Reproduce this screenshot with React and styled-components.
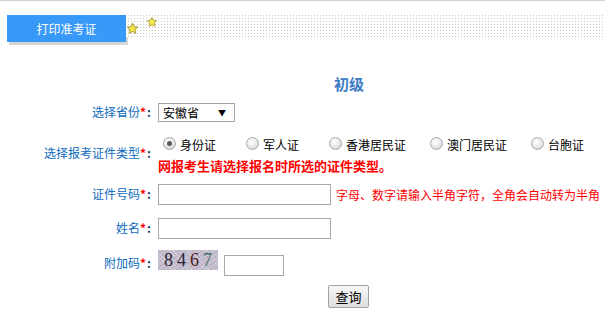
import React from "react";
import styled, { createGlobalStyle } from "styled-components";

const GlobalStyle = createGlobalStyle`
  html, body {
    margin: 0;
    padding: 0;
    background: #fff;
    font-family: "Noto Sans CJK SC", "Liberation Sans", sans-serif;
    font-size: 12px;
  }
`;

const Star = ({ size }) => (
  <svg width={size} height={size} viewBox="0 0 24 24">
    <path
      d="M12 2.5l2.9 6.1 6.6.8-4.9 4.6 1.3 6.6L12 17.3l-5.9 3.3 1.3-6.6-4.9-4.6 6.6-.8z"
      fill="#f8ea4c"
      stroke="#b5a642"
      strokeWidth="2"
      strokeLinejoin="round"
    />
  </svg>
);

const Page = () => (
  <Wrap>
    <GlobalStyle />
    <Header>
      <Tab>打印准考证</Tab>
      <Dots />
      <StarSpot $x={121} $y={7}>
        <Star size={13} />
      </StarSpot>
      <StarSpot $x={141} $y={1}>
        <Star size={12} />
      </StarSpot>
    </Header>

    <Title>初级</Title>

    <Row $top={8} $h={20}>
      <Label>
        选择省份<Req>*</Req><Colon>:</Colon>
      </Label>
      <SelectBox>
        <span>安徽省</span>
        <Arrow>▼</Arrow>
      </SelectBox>
    </Row>

    <Row $top={14} $h={40} $align="flex-start">
      <Label $mt={7}>
        选择报考证件类型<Req>*</Req><Colon>:</Colon>
      </Label>
      <Stack>
        <Radios>
          <Option $w={83}>
            <Radio $checked />
            身份证
          </Option>
          <Option $w={83}>
            <Radio />
            军人证
          </Option>
          <Option $w={101}>
            <Radio />
            香港居民证
          </Option>
          <Option $w={101}>
            <Radio />
            澳门居民证
          </Option>
          <Option $w={60}>
            <Radio />
            台胞证
          </Option>
        </Radios>
        <Warn>网报考生请选择报名时所选的证件类型。</Warn>
      </Stack>
    </Row>

    <Row $top={7} $h={22}>
      <Label>
        证件号码<Req>*</Req><Colon>:</Colon>
      </Label>
      <Field $w={173} />
      <Hint>字母、数字请输入半角字符，全角会自动转为半角</Hint>
    </Row>

    <Row $top={12} $h={22}>
      <Label>
        姓名<Req>*</Req><Colon>:</Colon>
      </Label>
      <Field $w={173} />
    </Row>

    <Row $top={11} $h={26} $align="stretch">
      <Label $center>
        附加码<Req>*</Req><Colon>:</Colon>
      </Label>
      <Captcha>
        <Digit $c="#2c2436">8</Digit>
        <Digit $c="#2a2538">4</Digit>
        <Digit $c="#4e1e26">6</Digit>
        <Digit $c="#3c6d66">7</Digit>
      </Captcha>
      <Field $w={60} $end />
    </Row>

    <ButtonRow>
      <Button>查询</Button>
    </ButtonRow>
  </Wrap>
);

const Wrap = styled.div`
  width: 605px;
  height: 322px;
  border-top: 1px solid #d6d1ca;
  box-sizing: border-box;
  overflow: hidden;
`;

const Header = styled.div`
  position: relative;
  display: flex;
  margin-top: 14px;
  height: 30px;
`;

const Tab = styled.div`
  width: 119px;
  height: 27px;
  margin-left: 7px;
  background: #3899f8;
  box-shadow: 2px 3px 0 #d6d6d6;
  color: #fff;
  font-size: 12px;
  line-height: 27px;
  text-align: center;
`;

const Dots = styled.div`
  flex: 1;
  height: 22px;
  background-image: linear-gradient(to right, #fff 2px, transparent 2px),
    linear-gradient(to bottom, #c9c9c9 1px, #fff 1px);
  background-size: 3px 3px;
`;

const StarSpot = styled.div`
  position: absolute;
  left: ${(p) => p.$x + 5}px;
  top: ${(p) => p.$y}px;
  line-height: 0;
`;

const Title = styled.div`
  margin-top: 29px;
  padding-left: 334px;
  height: 20px;
  line-height: 20px;
  font-size: 15px;
  font-weight: bold;
  color: #3d7bc4;
`;

const Row = styled.div`
  display: flex;
  align-items: ${(p) => p.$align || "center"};
  margin-top: ${(p) => p.$top}px;
  height: ${(p) => p.$h}px;
`;

const Label = styled.div`
  width: 152px;
  flex: none;
  text-align: right;
  color: #0e6bbd;
  line-height: 20px;
  margin-top: ${(p) => p.$mt || 0}px;
  margin-right: 6px;
  align-self: ${(p) => (p.$center ? "center" : "auto")};
`;

const Req = styled.span`
  color: #ff0000;
  font-weight: bold;
  margin-right: 1px;
`;

const Colon = styled.span`
  color: #17406e;
  font-weight: bold;
  margin-right: 1px;
`;

const SelectBox = styled.div`
  display: flex;
  align-items: center;
  justify-content: space-between;
  box-sizing: border-box;
  width: 77px;
  height: 19px;
  border: 1px solid #a5a5a5;
  padding: 0 8px 0 4px;
  color: #000;
  font-size: 12px;
`;

const Arrow = styled.span`
  font-size: 8px;
  color: #000;
`;

const Stack = styled.div`
  display: flex;
  flex-direction: column;
`;

const Radios = styled.div`
  display: flex;
  align-items: center;
  height: 20px;
  margin-left: 5px;
`;

const Option = styled.label`
  display: flex;
  align-items: center;
  width: ${(p) => p.$w}px;
  flex: none;
  color: #000;
  line-height: 20px;
  position: relative;
  top: -1px;
`;

const Radio = styled.span`
  position: relative;
  width: 11px;
  height: 11px;
  margin-right: 4px;
  margin-top: -4px;
  border-radius: 50%;
  border: 1px solid #a9a9a9;
  background: radial-gradient(circle at 40% 35%, #ffffff 0%, #e6e6e6 55%, #c9c9c9 100%);
  flex: none;

  &::after {
    content: "";
    display: ${(p) => (p.$checked ? "block" : "none")};
    position: absolute;
    left: 3px;
    top: 3px;
    width: 5px;
    height: 5px;
    border-radius: 50%;
    background: #5a5a5a;
  }
`;

const Warn = styled.div`
  color: #ff0000;
  font-weight: bold;
  font-size: 13px;
  line-height: 20px;
`;

const Field = styled.div`
  box-sizing: border-box;
  width: ${(p) => p.$w}px;
  height: 21px;
  border: 1px solid #a9a9a9;
  background: #fff;
  flex: none;
  align-self: ${(p) => (p.$end ? "flex-end" : "auto")};
  margin-left: ${(p) => (p.$end ? 6 : 0)}px;
`;

const Hint = styled.div`
  margin-left: 5px;
  color: #ff0000;
  white-space: nowrap;
`;

const Captcha = styled.div`
  display: flex;
  align-items: center;
  justify-content: center;
  gap: 4px;
  width: 60px;
  height: 20px;
  flex: none;
  align-self: flex-start;
  background-color: #c3bccc;
  background-image: repeating-linear-gradient(45deg, rgba(255, 255, 255, 0.25) 0 1px, transparent 1px 3px),
    repeating-linear-gradient(-30deg, rgba(120, 100, 140, 0.2) 0 1px, transparent 1px 4px);
  font-family: "Liberation Serif", serif;
  font-size: 18px;
  line-height: 20px;
`;

const Digit = styled.span`
  color: ${(p) => p.$c};
`;

const ButtonRow = styled.div`
  margin-top: 9px;
  padding-left: 328px;
`;

const Button = styled.button`
  box-sizing: border-box;
  width: 41px;
  height: 23px;
  padding: 0;
  border: 1px solid #a3a3a3;
  border-radius: 2px;
  background: linear-gradient(#f7f7f7, #dedede);
  color: #000;
  font-family: "Noto Sans CJK SC", sans-serif;
  font-size: 13px;
`;

export default function App() {
  return <Page />;
}
